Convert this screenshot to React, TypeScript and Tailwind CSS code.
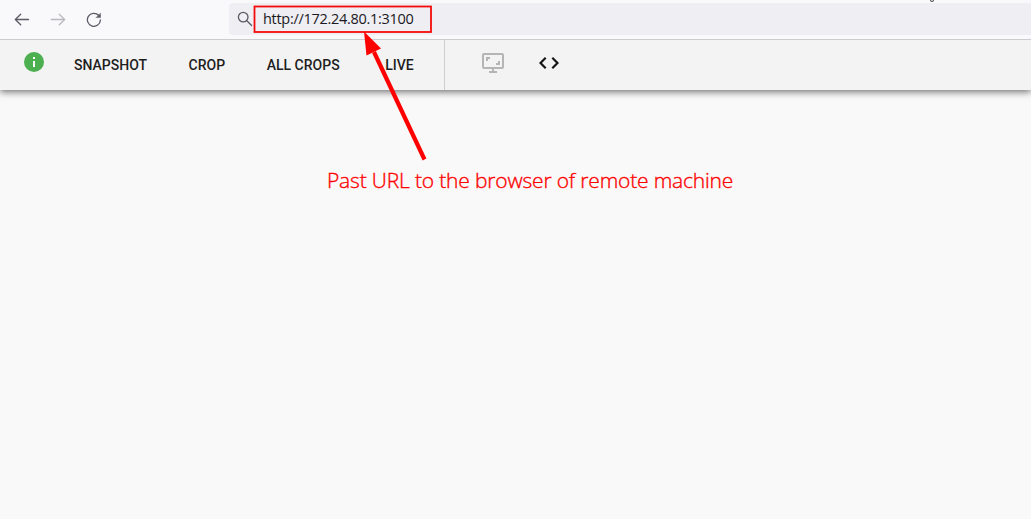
import React from "react";

function BrowserBar() {
  return (
    <div className="relative z-10 flex h-10 shrink-0 items-start border-b border-[#cccccf] bg-[#f9f9fb]">
      <div className="flex w-[229px] shrink-0 gap-5 pt-3 pl-3.5">
        <svg width="16" height="16" viewBox="0 0 16 16" fill="none" stroke="#5b5b66" strokeWidth="1.3" strokeLinecap="round" strokeLinejoin="round">
          <path d="M1.3 7.5H14.5M6.7 2.2L1.3 7.5L6.7 12.8" />
        </svg>
        <svg width="16" height="16" viewBox="0 0 16 16" fill="none" stroke="#b9b9c0" strokeWidth="1.3" strokeLinecap="round" strokeLinejoin="round">
          <path d="M1.3 7.5H14.5M9.3 2.2L14.7 7.5L9.3 12.8" />
        </svg>
        <svg width="16" height="16" viewBox="0 0 16 16" fill="none" stroke="#5b5b66" strokeWidth="1.3" strokeLinecap="round">
          <path d="M12.6 3.3A6.5 6.5 0 1 0 14.4 8" />
          <path d="M14.5 1.4V5.6H10.3Z" fill="#5b5b66" strokeWidth=".5" strokeLinejoin="round" />
        </svg>
      </div>
      <div className="mt-[3px] flex h-8 min-w-0 flex-1 items-center rounded-l bg-[#eeeef3]">
        <svg className="ml-2 shrink-0" width="16" height="16" viewBox="0 0 16 16" fill="none" stroke="#5b5b66" strokeWidth="1.3" strokeLinecap="round">
          <circle cx="6.2" cy="6.1" r="4.8" />
          <path d="M9.8 9.7L14.6 14.5" />
        </svg>
        <span className="ml-2.5 whitespace-nowrap font-['Open_Sans',sans-serif] text-[14.5px] leading-5 tracking-[-0.29px] text-[#1b1a22]">
          http://172.24.80.1:3100
        </span>
      </div>
    </div>
  );
}

function Toolbar() {
  return (
    <div className="relative flex h-[50px] shrink-0 bg-[#f3f3f3] font-[Roboto,sans-serif] text-[14px] font-medium text-[#1e1e1e] shadow-[0_2px_7px_rgba(0,0,0,0.55)]">
      <div className="flex w-[445px] shrink-0 border-r border-[#cfcfcf] pl-6">
        <svg className="mt-3 shrink-0" width="20" height="20" viewBox="0 0 20 20">
          <circle cx="10" cy="10" r="10" fill="#4caf50" />
          <path d="M9 5h2v2H9zM9 9h2v6H9z" fill="#fff" />
        </svg>
        <div className="flex items-center gap-[41.6px] pt-px pl-[30px] whitespace-nowrap">
          <span>SNAPSHOT</span>
          <span>CROP</span>
          <span>ALL CROPS</span>
          <span className="ml-1">LIVE</span>
        </div>
      </div>
      <svg className="mt-[13px] ml-[36px] shrink-0" width="24" height="20" viewBox="0 0 24 20" fill="none" stroke="#b5b5b5" strokeWidth="2">
        <rect x="2" y="1" width="20" height="14" rx="1" />
        <path d="M12 15V18M8 19H16M6 8V5H9M18 8V11H15" />
      </svg>
      <svg className="mt-[17px] ml-[34px] shrink-0" width="20" height="12" viewBox="0 0 20 12" fill="none" stroke="#151515" strokeWidth="2.2">
        <path d="M6.7 .8L1.5 6L6.7 11.2M13.3 .8L18.5 6L13.3 11.2" />
      </svg>
    </div>
  );
}

export default function App() {
  return (
    <div className="relative flex h-[519px] w-[1031px] flex-col overflow-hidden bg-[#f9f9f9]">
      <BrowserBar />
      <Toolbar />
      <main className="flex-1 pt-[76px] pl-[327px]">
        <p className="whitespace-nowrap font-['Open_Sans',sans-serif] text-[21px] leading-7 font-light tracking-[-0.17px] text-[#ff0000] [-webkit-text-stroke:0.35px_#ff0000]">
          Past URL to the browser of remote machine
        </p>
      </main>
      <svg className="pointer-events-none absolute inset-0 z-20" width="1031" height="519" viewBox="0 0 1031 519">
        <path d="M930 0.5Q932 2.5 934 0.5" fill="none" stroke="#333" />
        <rect x="254.5" y="6.5" width="176.5" height="25.5" fill="none" stroke="#f50a0a" strokeWidth="1.8" />
        <path d="M374 52L424.5 159.5" stroke="#ff0000" strokeWidth="4.2" />
        <path d="M364 31.5L381 48.5L366.5 55.5Z" fill="#ff0000" />
      </svg>
    </div>
  );
}
